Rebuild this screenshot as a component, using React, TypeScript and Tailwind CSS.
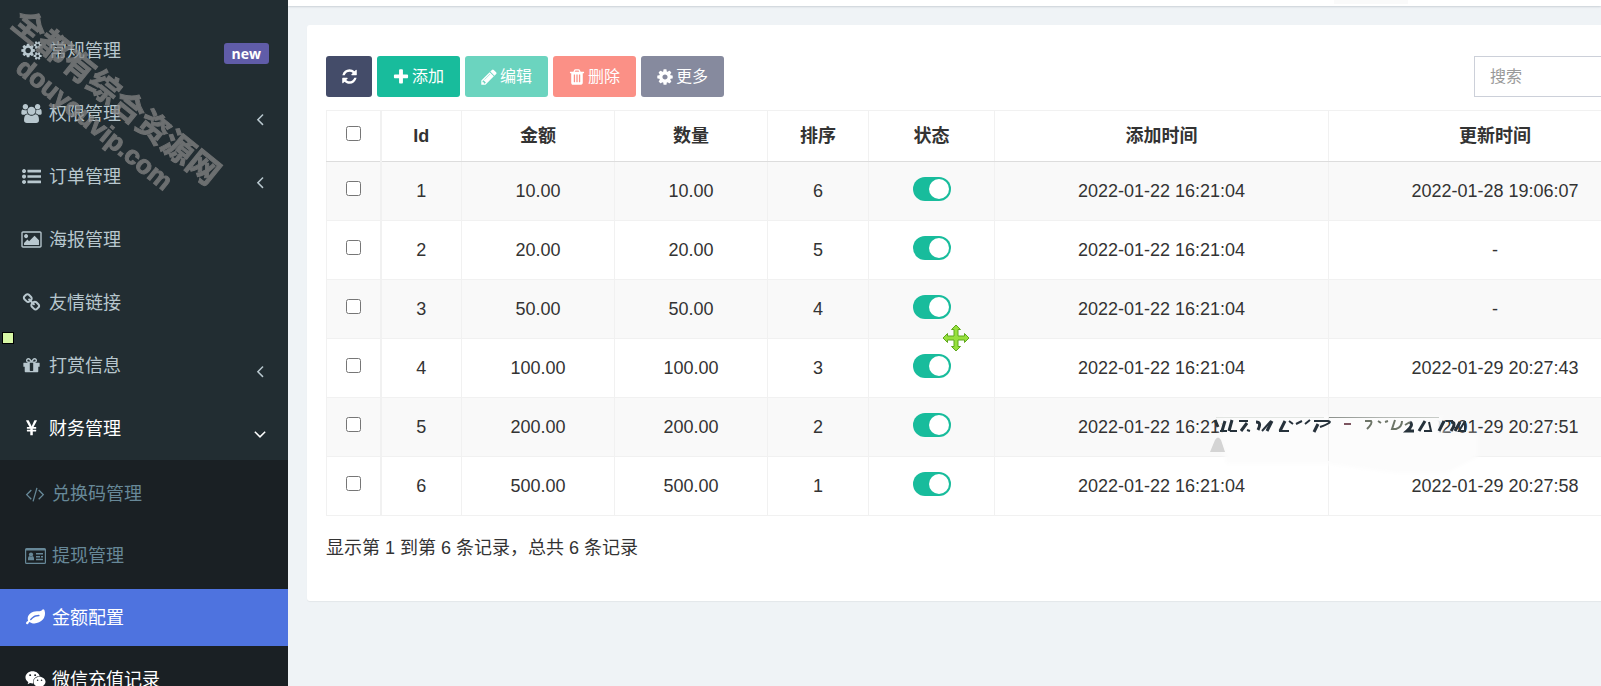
import React from 'react';
import { FaWeixin } from 'react-icons/fa';

const PATHS = {
  cogs: 'M896 896q0-106-75-181t-181-75-181 75-75 181 75 181 181 75 181-75 75-181zm768 512q0-52-38-90t-90-38-90 38-38 90q0 53 37.5 90.5t90.5 37.5 90.5-37.5 37.5-90.5zm0-1024q0-52-38-90t-90-38-90 38-38 90q0 53 37.5 90.5t90.5 37.5 90.5-37.5 37.5-90.5zm-384 421v185q0 10-7 19.5t-16 10.5l-155 24q-11 35-32 76 34 48 90 115 7 11 7 20 0 12-7 19-23 30-82.5 89.5t-78.5 59.5q-11 0-21-7l-115-90q-37 19-77 31-11 108-23 155-7 24-30 24h-186q-11 0-20-7.5t-10-17.5l-23-153q-34-10-75-31l-118 89q-7 7-20 7-11 0-21-8-144-133-144-160 0-9 7-19 10-14 41-53t47-61q-23-44-35-82l-152-24q-10-1-17-9.5t-7-19.5v-185q0-10 7-19.5t16-10.5l155-24q11-35 32-76-34-48-90-115-7-11-7-20 0-12 7-20 22-30 82-89t79-59q11 0 21 7l115 90q34-18 77-32 11-108 23-154 7-24 30-24h186q11 0 20 7.5t10 17.5l23 153q34 10 75 31l118-89q8-7 20-7 11 0 21 8 144 133 144 160 0 8-7 19-12 16-42 54t-45 60q23 48 34 82l152 23q10 2 17 10.5t7 19.5zm640 533v140q0 16-149 31-12 27-30 52 51 113 51 138 0 4-4 7-122 71-124 71-8 0-46-47t-52-68q-20 2-30 2t-30-2q-14 21-52 68t-46 47q-2 0-124-71-4-3-4-7 0-25 51-138-18-25-30-52-149-15-149-31v-140q0-16 149-31 13-29 30-52-51-113-51-138 0-4 4-7 4-2 35-20t59-34 30-16q8 0 46 46.5t52 67.5q20-2 30-2t30 2q51-71 92-112l6-2q4 0 124 70 4 3 4 7 0 25-51 138 17 23 30 52 149 15 149 31zm0-1024v140q0 16-149 31-12 27-30 52 51 113 51 138 0 4-4 7-122 71-124 71-8 0-46-47t-52-68q-20 2-30 2t-30-2q-14 21-52 68t-46 47q-2 0-124-71-4-3-4-7 0-25 51-138-18-25-30-52-149-15-149-31v-140q0-16 149-31 13-29 30-52-51-113-51-138 0-4 4-7 4-2 35-20t59-34 30-16q8 0 46 46.5t52 67.5q20-2 30-2t30 2q51-71 92-112l6-2q4 0 124 70 4 3 4 7 0 25-51 138 17 23 30 52 149 15 149 31z',
  group: 'M593 896q-162 5-265 128h-134q-82 0-138-40.5t-56-118.5q0-353 124-353 6 0 43.5 21t97.5 42.5 119 21.5q67 0 133-23-5 37-5 66 0 159 81 292zm1071 637q0 120-73 189.5t-194 69.5h-874q-121 0-194-69.5t-73-189.5q0-53 3.5-103.5t14-109 26.5-108.5 43-97.5 62-81 85.5-53.5 111.5-20q10 0 43 21.5t73 48 107 48 135 21.5 135-21.5 107-48 73-48 43-21.5q61 0 111.5 20t85.5 53.5 62 81 43 97.5 26.5 108.5 14 109 3.5 103.5zm-1024-1277q0 106-75 181t-181 75-181-75-75-181 75-181 181-75 181 75 75 181zm704 384q0 159-112.5 271.5t-271.5 112.5-271.5-112.5-112.5-271.5 112.5-271.5 271.5-112.5 271.5 112.5 112.5 271.5zm576 225q0 78-56 118.5t-138 40.5h-134q-103-123-265-128 81-133 81-292 0-29-5-66 66 23 133 23 59 0 119-21.5t97.5-42.5 43.5-21q124 0 124 353zm-128-609q0 106-75 181t-181 75-181-75-75-181 75-181 181-75 181 75 75 181z',
  list: 'M384 1408q0 80-56 136t-136 56-136-56-56-136 56-136 136-56 136 56 56 136zm0-512q0 80-56 136t-136 56-136-56-56-136 56-136 136-56 136 56 56 136zm1408 416v192q0 13-9.5 22.5t-22.5 9.5h-1216q-13 0-22.5-9.5t-9.5-22.5v-192q0-13 9.5-22.5t22.5-9.5h1216q13 0 22.5 9.5t9.5 22.5zm-1408-928q0 80-56 136t-136 56-136-56-56-136 56-136 136-56 136 56 56 136zm1408 416v192q0 13-9.5 22.5t-22.5 9.5h-1216q-13 0-22.5-9.5t-9.5-22.5v-192q0-13 9.5-22.5t22.5-9.5h1216q13 0 22.5 9.5t9.5 22.5zm0-512v192q0 13-9.5 22.5t-22.5 9.5h-1216q-13 0-22.5-9.5t-9.5-22.5v-192q0-13 9.5-22.5t22.5-9.5h1216q13 0 22.5 9.5t9.5 22.5z',
  picture: 'M640 576q0 80-56 136t-136 56-136-56-56-136 56-136 136-56 136 56 56 136zm1024 384v448h-1408v-192l320-320 160 160 512-512zm96-704h-1600q-13 0-22.5 9.5t-9.5 22.5v1216q0 13 9.5 22.5t22.5 9.5h1600q13 0 22.5-9.5t9.5-22.5v-1216q0-13-9.5-22.5t-22.5-9.5zm160 32v1216q0 66-47 113t-113 47h-1600q-66 0-113-47t-47-113v-1216q0-66 47-113t113-47h1600q66 0 113 47t47 113z',
  chain: 'M1520 1216q0-40-28-68l-208-208q-28-28-68-28-42 0-72 32 3 3 19 18.5t21.5 21.5 15 19 13 25.5 3.5 27.5q0 40-28 68t-68 28q-15 0-27.5-3.5t-25.5-13-19-15-21.5-21.5-18.5-19q-33 31-33 73 0 40 28 68l206 207q27 27 68 27 40 0 68-26l147-146q28-28 28-67zm-703-705q0-40-28-68l-206-207q-28-28-68-28-39 0-68 27l-147 146q-28 28-28 67 0 40 28 68l208 208q27 27 68 27 42 0 72-31-3-3-19-18.5t-21.5-21.5-15-19-13-25.5-3.5-27.5q0-40 28-68t68-28q15 0 27.5 3.5t25.5 13 19 15 21.5 21.5 18.5 19q33-31 33-73zm895 705q0 120-85 203l-147 146q-83 83-203 83-121 0-204-85l-206-207q-83-83-83-203 0-123 88-209l-88-88q-86 88-208 88-120 0-204-84l-208-208q-84-84-84-204t85-203l147-146q83-83 203-83 121 0 204 85l206 207q83 83 83 203 0 123-88 209l88 88q86-88 208-88 120 0 204 84l208 208q84 84 84 204z',
  gift: 'M1056 1356v-716h-320v716q0 25 18 38.5t46 13.5h192q28 0 46-13.5t18-38.5zm-456-844h195l-126-161q-26-31-69-31-40 0-68 28t-28 68 28 68 68 28zm688-96q0-40-28-68t-68-28q-43 0-69 31l-125 161h194q40 0 68-28t28-68zm376 256v320q0 14-9 23t-23 9h-96v416q0 40-28 68t-68 28h-1088q-40 0-68-28t-28-68v-416h-96q-14 0-23-9t-9-23v-320q0-14 9-23t23-9h440q-93 0-158.5-65.5t-65.5-158.5 65.5-158.5 158.5-65.5q107 0 168 77l128 165 128-165q61-77 168-77 93 0 158.5 65.5t65.5 158.5-65.5 158.5-158.5 65.5h440q14 0 23 9t9 23z',
  yen: 'M985.5 1536h-172q-13 0-22.5-9t-9.5-23v-330h-288q-13 0-22.5-9t-9.5-23v-103q0-13 9.5-22.5t22.5-9.5h288v-85h-288q-13 0-22.5-9t-9.5-23v-104q0-13 9.5-22.5t22.5-9.5h214l-321-578q-8-16 0-32 10-16 28-16h194q19 0 29 18l215 425q19 38 56 125 10-24 30.5-68t27.5-61l191-420q8-19 29-19h191q17 0 27 16 9 14 1 31l-313 579h215q13 0 22.5 9.5t9.5 22.5v104q0 14-9.5 23t-22.5 9h-290v85h290q13 0 22.5 9.5t9.5 22.5v103q0 14-9.5 23t-22.5 9h-290v330q0 13-9.5 22.5t-22.5 9.5z',
  code: 'M617 1399l-50 50q-10 10-23 10t-23-10l-466-466q-10-10-10-23t10-23l466-466q10-10 23-10t23 10l50 50q10 10 10 23t-10 23l-393 393 393 393q10 10 10 23t-10 23zm591-1067l-373 1291q-4 13-15.5 19.5t-23.5 2.5l-62-17q-13-4-19.5-15.5t-2.5-24.5l373-1291q4-13 15.5-19.5t23.5-2.5l62 17q13 4 19.5 15.5t2.5 24.5zm657 651l-466 466q-10 10-23 10t-23-10l-50-50q-10-10-10-23t10-23l393-393-393-393q-10-10-10-23t10-23l50-50q10-10 23-10t23 10l466 466q10 10 10 23t-10 23z',
  leaf: 'M1280 704q0-26-19-45t-45-19q-172 0-318 49.5t-259.5 134-235.5 219.5q-19 21-19 45 0 26 19 45t45 19q24 0 45-19 27-24 74-71t67-66q137-124 268.5-176t313.5-52q26 0 45-19t19-45zm512-198q0 95-20 193-46 224-184.5 383t-357.5 268q-214 108-438 108-148 0-286-47-15-5-88-42t-96-37q-16 0-39.5 32t-45 70-52.5 70-60 32q-43 0-63.5-17.5t-45.5-59.5q-2-4-6-11t-5.5-10-3-9.5-1.5-13.5q0-35 31-73.5t68-65.5 68-56 31-48q0-4-14-38t-16-44q-9-51-9-104 0-115 43.5-220t119-184.5 170.5-139 204-95.5q55-18 145-25.5t179.5-9 178.5-6 163.5-24 113.5-56.5l29.5-29.5 29.5-28 27-20 36.5-16 43.5-4.5q39 0 70.5 46t47.5 112 24 124 8 96z',
  refresh: 'M1639 1056q0 5-1 7-64 268-268 434.5t-478 166.5q-146 0-282.5-55t-243.5-157l-129 129q-19 19-45 19t-45-19-19-45v-448q0-26 19-45t45-19h448q26 0 45 19t19 45-19 45l-137 137q71 66 161 102t187 36q134 0 250-65t186-179q11-17 53-117 8-23 30-23h192q13 0 22.5 9.5t9.5 22.5zm25-800v448q0 26-19 45t-45 19h-448q-26 0-45-19t-19-45 19-45l138-138q-148-137-349-137-134 0-250 65t-186 179q-11 17-53 117-8 23-30 23h-199q-13 0-22.5-9.5t-9.5-22.5v-7q65-268 270-434.5t480-166.5q146 0 284 55.5t245 156.5l130-129q19-19 45-19t45 19 19 45z',
  plus: 'M1600 736v192q0 40-28 68t-68 28h-416v416q0 40-28 68t-68 28h-192q-40 0-68-28t-28-68v-416h-416q-40 0-68-28t-28-68v-192q0-40 28-68t68-28h416v-416q0-40 28-68t68-28h192q40 0 68 28t28 68v416h416q40 0 68 28t28 68z',
  pencil: 'M491 1536l91-91-235-235-91 91v107h128v128h107zm523-928q0-22-22-22-10 0-17 7l-542 542q-7 7-7 17 0 22 22 22 10 0 17-7l542-542q7-7 7-17zm-54-192l416 416-832 832h-416v-416zm683 96q0 53-37 90l-166 166-416-416 166-165q36-38 90-38 53 0 91 38l235 234q37 39 37 91z',
  trash: 'M704 1376v-704q0-14-9-23t-23-9h-64q-14 0-23 9t-9 23v704q0 14 9 23t23 9h64q14 0 23-9t9-23zm256 0v-704q0-14-9-23t-23-9h-64q-14 0-23 9t-9 23v704q0 14 9 23t23 9h64q14 0 23-9t9-23zm256 0v-704q0-14-9-23t-23-9h-64q-14 0-23 9t-9 23v704q0 14 9 23t23 9h64q14 0 23-9t9-23zm-544-992h448l-48-117q-7-9-17-11h-317q-10 2-17 11zm928 32v64q0 14-9 23t-23 9h-96v948q0 83-47 143.5t-113 60.5h-832q-66 0-113-58.5t-47-141.5v-952h-96q-14 0-23-9t-9-23v-64q0-14 9-23t23-9h309l70-167q15-37 54-63t79-26h320q40 0 79 26t54 63l70 167h309q14 0 23 9t9 23z',
  cog: 'M1152 896q0-106-75-181t-181-75-181 75-75 181 75 181 181 75 181-75 75-181zm512-109v222q0 12-8 23t-20 13l-185 28q-19 54-39 91 35 50 107 138 10 12 10 25t-9 23q-27 37-99 108t-94 71q-12 0-26-9l-138-108q-44 23-91 38-16 136-29 186-7 28-36 28h-222q-14 0-24.5-8.5t-11.5-21.5l-28-184q-49-16-90-37l-141 107q-10 9-25 9-14 0-25-11-126-114-165-168-7-10-7-23 0-12 8-23 15-21 51-66.5t54-70.5q-27-50-41-99l-183-27q-13-2-21-12.5t-8-23.5v-222q0-12 8-23t19-13l186-28q14-46 39-92-40-57-107-138-10-12-10-24 0-10 9-23 26-36 98.5-107.5t94.5-71.5q13 0 26 10l138 107q44-23 91-38 16-136 29-186 7-28 36-28h222q14 0 24.5 8.5t11.5 21.5l28 184q49 16 90 37l142-107q9-9 24-9 13 0 25 10 129 119 165 170 7 8 7 22 0 12-8 23-15 21-51 66.5t-54 70.5q26 50 41 98l183 28q13 2 21 12.5t8 23.5z',
  left: 'M1203 544q0 13-10 23l-393 393 393 393q10 10 10 23t-10 23l-50 50q-10 10-23 10t-23-10l-466-466q-10-10-10-23t10-23l466-466q10-10 23-10t23 10l50 50q10 10 10 23z',
  down: 'M1395 736q0 13-10 23l-466 466q-10 10-23 10t-23-10l-466-466q-10-10-10-23t10-23l50-50q10-10 23-10t23 10l393 393 393-393q10-10 23-10t23 10l50 50q10 10 10 23z',
};

type IconName = keyof typeof PATHS;

function Icon({ name, wide = false, className }: { name: IconName; wide?: boolean; className: string }) {
  return (
    <svg aria-hidden="true" viewBox={wide ? '0 0 1920 1792' : '0 0 1792 1792'} fill="currentColor" className={className}>
      <path d={PATHS[name]} />
    </svg>
  );
}

function CardIcon() {
  return (
    <svg aria-hidden="true" viewBox="0 0 21 16" fill="currentColor" className="h-4 w-[21px]">
      <path fillRule="evenodd" d="M1.500 0h18A1.500 1.500 0 0 1 21 1.500v13a1.500 1.500 0 0 1-1.500 1.500h-18A1.500 1.500 0 0 1 0 14.500v-13A1.500 1.500 0 0 1 1.500 0zM1.200 2.500v12q0 .3.3.3h18q.3 0 .3-.3v-12z" />
      <circle cx="6" cy="6.500" r="2.100" />
      <path d="M3 12.300v-1.800Q3 8.200 4.500 8q1.500 1 3 0Q9 8.200 9 10.500v1.800zM11 5h7v1.400h-7zM11 8h4v1.400h-4zM16 8h2v1.400h-2zM11 10.800h7v1.400h-7z" />
    </svg>
  );
}

interface MenuItem {
  label: string;
  icon: IconName;
  wide?: boolean;
  badge?: string;
  arrow?: 'left' | 'down';
}

const menu: MenuItem[] = [
  { label: '常规管理', icon: 'cogs', wide: true, badge: 'new' },
  { label: '权限管理', icon: 'group', wide: true, arrow: 'left' },
  { label: '订单管理', icon: 'list', arrow: 'left' },
  { label: '海报管理', icon: 'picture', wide: true },
  { label: '友情链接', icon: 'chain' },
  { label: '打赏信息', icon: 'gift', arrow: 'left' },
  { label: '财务管理', icon: 'yen', arrow: 'down' },
];

const submenu = [
  { label: '兑换码管理', icon: <Icon name="code" wide className="h-[18px] w-5" />, tone: 'text-[#678898]' },
  { label: '提现管理', icon: <CardIcon />, tone: 'text-[#678898]' },
  { label: '金额配置', icon: <Icon name="leaf" className="size-[19px]" />, tone: 'bg-[#4e73df] text-white' },
  { label: '微信充值记录', icon: <FaWeixin className="size-[21px]" />, tone: 'text-white' },
];

function Sidebar() {
  return (
    <nav className="relative w-72 shrink-0 overflow-hidden bg-[#222d32] pt-[19px]">
      <ul>
        {menu.map((m) => (
          <li key={m.label}>
            <a
              href="#"
              className={`flex h-[63px] items-center pr-[18px] pl-5 ${m.arrow === 'down' ? 'text-white' : 'text-[#b8c7ce]'}`}
            >
              <span className="flex w-[23px] justify-center">
                <Icon name={m.icon} wide={m.wide} className={m.wide ? 'h-[19px] w-[21px]' : 'size-[19px]'} />
              </span>
              <span className="ml-[6px] flex-1">{m.label}</span>
              {m.badge && (
                <span className="mt-[6px] mr-px rounded-[3px] bg-[#605ca8] px-2 font-['Open_Sans',sans-serif] text-[14px] leading-[21px] font-bold text-white">
                  {m.badge}
                </span>
              )}
              {m.arrow && <Icon name={m.arrow} className="mt-[10px] size-5" />}
            </a>
          </li>
        ))}
      </ul>
      <ul className="flex flex-col gap-[5px] bg-[#1a2024] pt-[5px] pb-5">
        {submenu.map((m) => (
          <li key={m.label}>
            <a href="#" className={`flex h-[57px] items-center pl-6 ${m.tone}`}>
              <span className="flex w-[22px] justify-center">{m.icon}</span>
              <span className="ml-[6px]">{m.label}</span>
            </a>
          </li>
        ))}
      </ul>
      <div className="pointer-events-none absolute top-[76px] left-[-23px] w-[258px] rotate-[39deg] text-center font-['Liberation_Sans','Noto_Sans_CJK_SC',sans-serif] font-bold text-[#858585] opacity-75 [-webkit-text-stroke:1px_#858585]">
        <div className="text-[32px] leading-9">全都有综合资源网</div>
        <div className="text-[26px] leading-8">douyouvip.com</div>
      </div>
      <div className="absolute top-[332px] left-[2px] size-3 border border-black bg-[#d7f7a5]" />
    </nav>
  );
}

const rows = [
  ['1', '10.00', '10.00', '6', '2022-01-22 16:21:04', '2022-01-28 19:06:07'],
  ['2', '20.00', '20.00', '5', '2022-01-22 16:21:04', '-'],
  ['3', '50.00', '50.00', '4', '2022-01-22 16:21:04', '-'],
  ['4', '100.00', '100.00', '3', '2022-01-22 16:21:04', '2022-01-29 20:27:43'],
  ['5', '200.00', '200.00', '2', '2022-01-22 16:21:04', '2022-01-29 20:27:51'],
  ['6', '500.00', '500.00', '1', '2022-01-22 16:21:04', '2022-01-29 20:27:58'],
];

const headings = ['Id', '金额', '数量', '排序', '状态', '添加时间', '更新时间'];

const cell = 'border border-[#f1f1f1] text-center';

function Toggle({ id }: { id: string }) {
  return (
    <button
      type="button"
      role="switch"
      aria-checked="true"
      aria-label={`状态 ${id}`}
      className="mb-[5px] inline-flex h-6 w-[38px] items-center justify-end rounded-full bg-[#18bc9c] pr-[2px] align-middle"
    >
      <span className="size-5 rounded-full bg-white" />
    </button>
  );
}

function Check({ label }: { label: string }) {
  return <input type="checkbox" aria-label={label} className="mb-[7px] size-[15px] align-middle" />;
}

function DataTable() {
  return (
    <table className="mt-[13px] w-full table-fixed border-collapse border border-[#f1f1f1]">
      <colgroup>
        <col className="w-[54px]" />
        <col className="w-[81px]" />
        <col className="w-[153px]" />
        <col className="w-[153px]" />
        <col className="w-[101px]" />
        <col className="w-[126px]" />
        <col className="w-[334px]" />
        <col />
      </colgroup>
      <thead>
        <tr className="h-[51px] border-b border-[#ddd]">
          <th className="border border-r-2 border-[#f1f1f1] border-b-[#ddd]">
            <Check label="全选" />
          </th>
          {headings.map((h) => (
            <th key={h} className="border border-[#f1f1f1] border-b-[#ddd] text-center font-bold">
              {h}
            </th>
          ))}
        </tr>
      </thead>
      <tbody>
        {rows.map(([id, amount, count, sort, created, updated]) => (
          <tr key={id} className="h-[59px] odd:bg-[#f9f9f9]">
            <td className="border border-r-2 border-[#f1f1f1] text-center">
              <Check label={`选择 ${id}`} />
            </td>
            <td className={cell}>{id}</td>
            <td className={cell}>{amount}</td>
            <td className={cell}>{count}</td>
            <td className={cell}>{sort}</td>
            <td className={cell}>
              <Toggle id={id} />
            </td>
            <td className={cell}>{created}</td>
            <td className={cell}>{updated}</td>
          </tr>
        ))}
      </tbody>
    </table>
  );
}

const actions: { label: string; icon: IconName; tone: string }[] = [
  { label: '添加', icon: 'plus', tone: 'bg-[#18bc9c]' },
  { label: '编辑', icon: 'pencil', tone: 'bg-[#6bd4bf]' },
  { label: '删除', icon: 'trash', tone: 'bg-[#fb9086]' },
  { label: '更多', icon: 'cog', tone: 'bg-[#868a9e]' },
];

function Toolbar() {
  return (
    <div className="flex items-center justify-between">
      <div className="flex gap-[5px] text-[16px] text-white">
        <button type="button" aria-label="刷新" className="flex h-[41px] w-[46px] items-center justify-center rounded-[3px] bg-[#444c69]">
          <Icon name="refresh" className="size-[17px]" />
        </button>
        {actions.map((a) => (
          <button key={a.label} type="button" className={`flex h-[41px] items-center gap-[2px] rounded-[3px] pr-4 pl-[15px] ${a.tone}`}>
            <Icon name={a.icon} className="size-[18px]" />
            {a.label}
          </button>
        ))}
      </div>
      <input
        type="text"
        aria-label="搜索"
        placeholder="搜索"
        className="h-[41px] w-[188px] border border-[#ccd0d9] bg-white px-[15px] text-[16px] placeholder:text-[#999]"
      />
    </div>
  );
}

function MoveCursor() {
  return (
    <svg aria-hidden="true" viewBox="0 0 28 28" className="pointer-events-none absolute top-[324px] left-[942px] size-7">
      <path
        d="M14 1l4.500 4.500H16V12h6.500V9.500L27 14l-4.500 4.500V16H16v6.500h2.500L14 27l-4.500-4.500H12V16H5.500v2.500L1 14l4.500-4.500V12H12V5.500H9.500z"
        fill="#97e03c"
        stroke="#5fa81c"
        strokeLinejoin="round"
      />
    </svg>
  );
}

function Smudge() {
  return (
    <svg aria-hidden="true" viewBox="0 0 280 66" className="pointer-events-none absolute top-[412px] left-[1206px] h-[66px] w-[280px]">
      <defs>
        <filter id="soft" x="-10%" y="-20%" width="120%" height="140%">
          <feGaussianBlur stdDeviation="2" />
        </filter>
        <filter id="ink" x="-5%" y="-20%" width="110%" height="140%">
          <feGaussianBlur stdDeviation="0.700" />
        </filter>
        <linearGradient id="edge">
          <stop offset="0" stopColor="#8c918c" />
          <stop offset="0.500" stopColor="#b4b8b4" />
          <stop offset="1" stopColor="#c8ccc8" />
        </linearGradient>
      </defs>
      <path d="M14 4H236V22H272V45L240 61H190L124 52H20L14 22z" fill="#fcfcfc" filter="url(#soft)" />
      <path d="M4 40l5-12q3-5 6 0l4 12z" fill="#d4d4d4" filter="url(#ink)" />
      <rect x="10" y="5" width="108" height="1" fill="#e2e5e2" />
      <rect x="123" y="5" width="110" height="1" fill="url(#edge)" />
      <rect x="122" y="5" width="1" height="44" fill="#ececec" />
      <g fill="none" stroke="#26303a" filter="url(#ink)">
        <path strokeWidth="3" d="M9 8l3 7M19 9l-3 10M26 8l-3 11M41 11l-6 8M50 10q6 0 2 8M66 9l-5 10M79 9l-5 10M112 12l-4 8M204 10q4 3-3 9h7M219 9l-6 10M238 9l-5 10M245 10q6 0 0 9M254 10l-5 9" />
        <path strokeWidth="2" d="M14 19h7M24 19h7M33 9h9M44 19l-3-1M56 19l9-10M73 19h10M83 9l4 3M90 12l6-3M99 12l5-4M108 9h14q6 1-8 6M128 9" />
        <path strokeWidth="2" d="M218 19h7l-2-9M240 9h7M259 9l-6 10h7M259 9v10" />
      </g>
      <g fill="none" stroke="#6d7468" strokeWidth="2" filter="url(#ink)">
        <path stroke="#7d5560" d="M138 12h7" />
        <path d="M159 9h6q2 2-4 8M172 9l3 2M179 10l3-1M189 8l-3 9h4q6-2 6-8M199 13l5-3" />
      </g>
    </svg>
  );
}

export default function App() {
  return (
    <div className="relative flex h-screen overflow-hidden bg-[#eff3f6] font-['Liberation_Sans','Noto_Sans_CJK_SC',sans-serif] text-[18px] leading-[26px] text-[#333]">
      <Sidebar />
      <main className="min-w-0 flex-1 overflow-hidden">
        <div className="flex h-[6px] justify-end bg-white pr-[193px] shadow-[0_1px_2px_rgba(0,21,41,0.15)]">
          <div className="h-1 w-[74px] bg-[#fafafa]" />
        </div>
        <section className="mt-[19px] ml-[19px] w-full min-w-[1374px] rounded-[3px] bg-white px-[19px] pt-[31px] pb-10 shadow-[0_1px_1px_rgba(0,0,0,0.05)]">
          <Toolbar />
          <DataTable />
          <p className="mt-[19px]">显示第 1 到第 6 条记录，总共 6 条记录</p>
        </section>
      </main>
      <MoveCursor />
      <Smudge />
    </div>
  );
}
